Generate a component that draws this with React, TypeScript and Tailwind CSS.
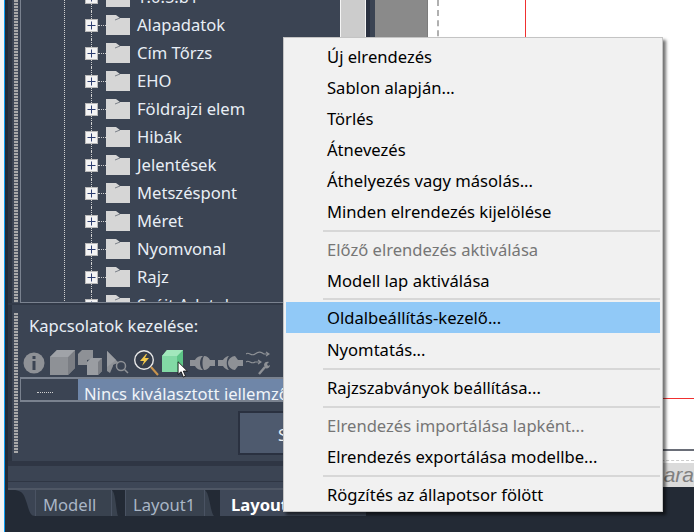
import React from "react";

const treeItems = ["1.0.5.b1", "Alapadatok", "Cím Tőrzs", "EHO", "Földrajzi elem", "Hibák", "Jelentések", "Metszéspont", "Méret", "Nyomvonal", "Rajz", "Szójt Adatok"];

function Plus() {
  return (
    <svg width="13" height="13" viewBox="0 0 13 13" className="shrink-0">
      <rect x="0.5" y="0.5" width="12" height="12" fill="#f4f4f4" stroke="#b9b9b9" />
      <path d="M6.5 2.5v8M2.5 6.5h8" stroke="#2f3f70" strokeWidth="1" />
    </svg>
  );
}

function Folder() {
  return (
    <svg width="24" height="20" viewBox="0 0 24 20" className="shrink-0">
      <path d="M0 0H10L14 3H24V20H0Z" fill="#d6d6d6" />
      <path d="M9 5L14 3" stroke="#3b4453" strokeWidth="0.6" fill="none" />
    </svg>
  );
}

function TreeRow({ label }: { label: string }) {
  return (
    <div className="h-[28px] flex items-center pl-[20px] shrink-0">
      <div className="w-[13px] h-full flex flex-col items-center shrink-0">
        <div className="flex-1 border-l border-dotted border-[#d0d0d0]" />
        <Plus />
        <div className="flex-1 border-l border-dotted border-[#d0d0d0]" />
      </div>
      <div className="w-[8px] border-t border-dotted border-[#d0d0d0]" />
      <Folder />
      <span className="ml-[7px] text-[16.6px] leading-[28px] text-[#e8eef5] whitespace-nowrap">{label}</span>
    </div>
  );
}

function ToolbarIcons() {
  return (
    <div className="flex items-center h-[28px] ml-[3px] mt-[1px] -mb-[1px]">
      {/* info */}
      <svg width="22" height="24" viewBox="0 0 22 24" className="shrink-0">
        <circle cx="11" cy="12" r="10.5" fill="#8e9196" />
        <rect x="9.5" y="5" width="3" height="3" fill="#3b4453" />
        <rect x="9.5" y="10" width="3" height="9" fill="#3b4453" />
      </svg>
      {/* cube */}
      <svg width="25" height="26" viewBox="0 0 25 26" className="shrink-0 ml-[5px]">
        <path d="M0 7L7 0H25V18L18 25H0Z" fill="#8e9196" />
        <path d="M18 7L25 0V18L18 25Z" fill="#7b7e84" />
        <path d="M0 7L7 0H25L18 7Z" fill="#a0a3a8" />
      </svg>
      {/* stacked cubes */}
      <svg width="25" height="26" viewBox="0 0 25 26" className="shrink-0 ml-[3px]">
        <path d="M0 4L4 0H15V9L9 10V15H0Z" fill="#8e9196" />
        <path d="M9 12L13 8H24V21L20 25H9Z" fill="#9a9da2" />
        <path d="M20 12L24 8V21L20 25Z" fill="#7b7e84" />
      </svg>
      {/* cursor + magnifier */}
      <svg width="22" height="24" viewBox="0 0 22 24" className="shrink-0 ml-[4px]">
        <path d="M0 0L12 12L8 13L6 14V15L3 22L0 20Z" fill="#8e9196" />
        <path d="M0 0L9 9L0 16Z" fill="#9a9da2" />
        <circle cx="14" cy="15" r="4.5" fill="none" stroke="#8e9196" strokeWidth="1.5" />
        <path d="M17.5 18.5L21 22" stroke="#8e9196" strokeWidth="1.5" />
      </svg>
      {/* lightning magnifier */}
      <svg width="25" height="27" viewBox="0 0 25 27" className="shrink-0 ml-[5px]">
        <circle cx="10" cy="10" r="9.3" fill="#343c4a" stroke="#e8e8e8" strokeWidth="1.4" />
        <path d="M12 4L6 11H10L8 16L15 8H11L13 4Z" fill="#f2c84b" />
        <path d="M17 17L24 25" stroke="#c9944d" strokeWidth="2" />
      </svg>
      {/* green cube + pointer */}
      <div className="w-[24px] h-[26px] ml-[3px] shrink-0 relative">
        <svg width="21" height="22" viewBox="0 0 21 22">
          <path d="M0 6L5 0H21V16L16 22H0Z" fill="#82d9a5" />
          <path d="M15 6L21 0V16L15 22Z" fill="#5cc486" />
          <path d="M0 6L5 0H21L15 6Z" fill="#a2e8bc" />
        </svg>
        <svg width="12" height="18" viewBox="0 0 11 16" className="absolute left-[15px] top-[11px]">
          <path d="M1 0.5V12L3.8 9.6L5.8 14.5L7.8 13.6L5.8 9H9.5Z" fill="#fff" stroke="#111" strokeWidth="0.8" />
        </svg>
      </div>
      {/* connector 1 */}
      <svg width="25" height="16" viewBox="0 0 25 14" className="shrink-0 ml-[4px]">
        <path d="M0 4H5C7 0 11 0 13 0C9 3 9 11 13 14C11 14 7 14 5 10H0Z" fill="#8e9196" />
        <path d="M14 0C17 0 19 2 20 4H25V10H20C19 12 17 14 14 14C12 11 12 3 14 0Z" fill="#8e9196" />
      </svg>
      {/* connector 2 */}
      <svg width="25" height="16" viewBox="0 0 25 14" className="shrink-0 ml-[3px]">
        <path d="M0 4H5C6 2 9 0 11 0C8 3 8 11 11 14C9 14 6 12 5 10H0Z" fill="#8e9196" />
        <path d="M10 7C10 3 14 0 17 0C18 1 19 3 20 4H25V10H20C19 11 18 13 17 14C14 14 10 11 10 7Z" fill="#8e9196" />
      </svg>
      {/* waves + wrench */}
      <svg width="24" height="24" viewBox="0 0 24 24" className="shrink-0 ml-[3px]">
        <path d="M0 3C3 0 5 6 9 3S15 1 18 3H22M20 1L23 3L20 5" fill="none" stroke="#8e9196" strokeWidth="1.1" />
        <path d="M0 11C3 8 5 14 9 11H14M12 9L15 11L12 13" fill="none" stroke="#8e9196" strokeWidth="1.1" />
        <path d="M13 23L19 16" stroke="#8e9196" strokeWidth="2.4" />
        <path d="M18 14C18 11 21 10 23 11L21 13L22 15L24 14C24 17 21 18 19 17Z" fill="#8e9196" />
      </svg>
    </div>
  );
}

function Tabs() {
  return (
    <div className="h-[26px] flex bg-[#232a35] items-stretch text-[16.6px]">
      <svg width="30" height="26" viewBox="0 0 30 26" className="shrink-0">
        <path d="M30 26C24 26 24 18 20 8C18 2 14 0 8 0H30Z" fill="#3b4453" />
      </svg>
      <div className="w-[77px] bg-[#39424f] border-x border-[#4a5363] pl-[7px] text-[#a9b6c6] leading-[30px]">Modell</div>
      <svg width="13" height="26" viewBox="0 0 13 26" className="shrink-0">
        <path d="M0 0H2C6 6 6 26 12 26H13V26H0Z" fill="#232a35" />
        <path d="M0 0C4 4 4 22 6 26H0Z" fill="#39424f" />
      </svg>
      <div className="w-[80px] bg-[#39424f] border-x border-[#4a5363] pl-[7px] text-[#a9b6c6] leading-[30px]">Layout1</div>
      <svg width="15" height="26" viewBox="0 0 15 26" className="shrink-0">
        <path d="M0 0C5 4 5 22 9 26H0Z" fill="#39424f" />
      </svg>
      <div className="flex-1 bg-[#3f4858] pl-[11px] font-bold text-white leading-[30px] overflow-hidden">Layout2</div>
    </div>
  );
}

type MenuEntry = { t?: string; dis?: boolean; hi?: boolean; sep?: number };
const menu: MenuEntry[] = [
  { t: "Új elrendezés" },
  { t: "Sablon alapján..." },
  { t: "Törlés" },
  { t: "Átnevezés" },
  { t: "Áthelyezés vagy másolás..." },
  { t: "Minden elrendezés kijelölése" },
  { sep: 7 },
  { t: "Előző elrendezés aktiválása", dis: true },
  { t: "Modell lap aktiválása" },
  { sep: 6 },
  { t: "Oldalbeállítás-kezelő...", hi: true },
  { sep: 1 },
  { t: "Nyomtatás..." },
  { sep: 7 },
  { t: "Rajzszabványok beállítása..." },
  { sep: 7 },
  { t: "Elrendezés importálása lapként...", dis: true },
  { t: "Elrendezés exportálása modellbe..." },
  { sep: 7 },
  { t: "Rögzítés az állapotsor fölött" },
];

function Menu() {
  return (
    <div className="absolute left-[283px] top-[37px] w-[380px] h-[475px] bg-[#f1f1f1] border border-[#c4c4c4] pt-[3px] shadow-[3px_3px_3px_rgba(0,0,0,0.55)] text-[16.6px]">
      {menu.map((m, i) =>
        m.t ? (
          <div
            key={i}
            className={
              "h-[31px] mx-[2px] pl-[41px] leading-[31px] whitespace-nowrap " +
              (m.hi ? "bg-[#91c9f7] text-black" : m.dis ? "text-[#767676]" : "text-black")
            }
          >
            {m.t}
          </div>
        ) : m.sep === 7 ? (
          <div key={i} className="h-[7px] flex items-center ml-[39px] mr-[2px]"><div className="h-[2px] w-full bg-[#d7d7d7]" /></div>
        ) : m.sep === 6 ? (
          <div key={i} className="h-[6px] flex items-center ml-[39px] mr-[2px]"><div className="h-[2px] w-full bg-[#d7d7d7]" /></div>
        ) : (
          <div key={i} className="h-[1px]" />
        )
      )}
    </div>
  );
}

export default function App() {
  return (
    <div className="relative w-[694px] h-[532px] overflow-hidden bg-[#232a35] flex font-['Noto_Sans',sans-serif]">
      {/* window edge */}
      <div className="w-[4px] bg-[#f4f4f4] shrink-0" />
      <div className="w-[1px] bg-[#0d9cf0] shrink-0" />
      {/* left column */}
      <div className="w-[361px] shrink-0 flex flex-col">
        <div className="h-[490px] flex flex-col">
          <div className="h-[461px] flex">
            <div className="w-[3px] bg-[#232a35]" />
            <div className="w-[4px] bg-[#2c3441]" />
            <div className="flex-1 bg-[#3b4453] flex flex-col">
              <div className="h-[303px] flex">
                <div className="w-[2px]" />
                <div className="w-[4px] bg-[repeating-linear-gradient(to_bottom,#a9a9a9_0,#a9a9a9_2px,#4a5260_2px,#4a5260_3px)]" />
                <div className="w-[2px]" />
                {/* tree */}
                <div className="flex-1 flex min-w-0">
                  <div className="w-[320px] border-l-[1px] border-b-[1px] border-[#7a828f] overflow-hidden pl-[43px]">
                    <div className="border-l border-dotted border-[#d0d0d0] -mt-[17px] h-[330px] flex flex-col">
                      {treeItems.map((t) => (
                        <TreeRow key={t} label={t} />
                      ))}
                    </div>
                  </div>
                  <div className="flex-1 bg-[#cccccc] border-x border-[#f4f4f4]" />
                </div>
              </div>
              <div className="h-[2px] -ml-[4px] bg-[#323a48]" />
              <div className="flex-1 flex">
                <div className="w-[2px]" />
                <div className="w-[4px] my-[8px] bg-[repeating-linear-gradient(to_bottom,#a9a9a9_0,#a9a9a9_2px,#4a5260_2px,#4a5260_3px)]" />
                <div className="flex-1 pl-[2px] flex flex-col min-w-0">
                  <div className="h-[43px] pl-[9px] pt-[9px] text-[16.6px] leading-[24px] text-[#e8eef5]">Kapcsolatok kezelése:</div>
                  <ToolbarIcons />
                  <div className="mt-[1px] h-[25px] border-l border-t-2 border-b-2 border-[#7a828f] flex overflow-hidden">
                    <div className="w-[57px] flex items-center pl-[16px] pt-[5px]">
                      <div className="w-[16px] border-t border-dotted border-[#d0d0d0]" />
                    </div>
                    <div className="flex-1 bg-[#6f86a8] pl-[6px] text-[16.6px] leading-[29px] text-[#f0f4f8] whitespace-nowrap overflow-hidden">Nincs kiválasztott jellemző</div>
                  </div>
                  <div className="flex justify-end mt-[9px]">
                    <div className="w-[128px] h-[44px] bg-[#4e5a6e] border-2 border-[#2a3140] pl-[38px] text-[16.6px] leading-[44px] text-[#e8eef5] overflow-hidden">S</div>
                  </div>
                </div>
              </div>
            </div>
          </div>
          <div className="h-[5px] ml-[3px] bg-[#2f3644]" />
          <div className="h-[16px] ml-[3px] bg-[#3b4453] border-b border-[#2f3644]" />
          <div className="h-[8px] ml-[3px] bg-[#3d4656] border-b-2 border-[#4f5765]" />
        </div>
        <Tabs />
      </div>
      {/* right column */}
      <div className="flex-1 h-[487px] flex">
        <div className="w-[4px] bg-[#2a3140]" />
        <div className="w-[5px] bg-[#3b4453]" />
        <div className="w-[53px] bg-[#8a8a8a] border-r-[1px] border-[#7c7c7c]" />
        <div className="flex-1 flex flex-col bg-white min-w-0">
          <div className="h-[449px] relative pl-[9px]">
            <div className="h-full border-l-2 border-dashed border-[#b0b0b0]" />
            <div className="absolute left-[97px] top-0 h-[60px] w-[1px] bg-[#f03030]" />
            <div className="absolute left-[200px] right-0 top-[398px] h-[1px] bg-[#f03030]" />
          </div>
          <div className="h-[2px] bg-[#6a6e78]" />
          <div className="h-[9px] bg-white" />
          <div className="h-[1px] border-t border-dashed border-[#cccccc]" />
          <div className="flex-1 bg-[#dbdbdb] mt-[2px] text-right overflow-hidden text-[21px] italic leading-[24px] text-[#808080] font-['Liberation_Sans',sans-serif] whitespace-nowrap">ara</div>
        </div>
      </div>
      <Menu />
    </div>
  );
}
